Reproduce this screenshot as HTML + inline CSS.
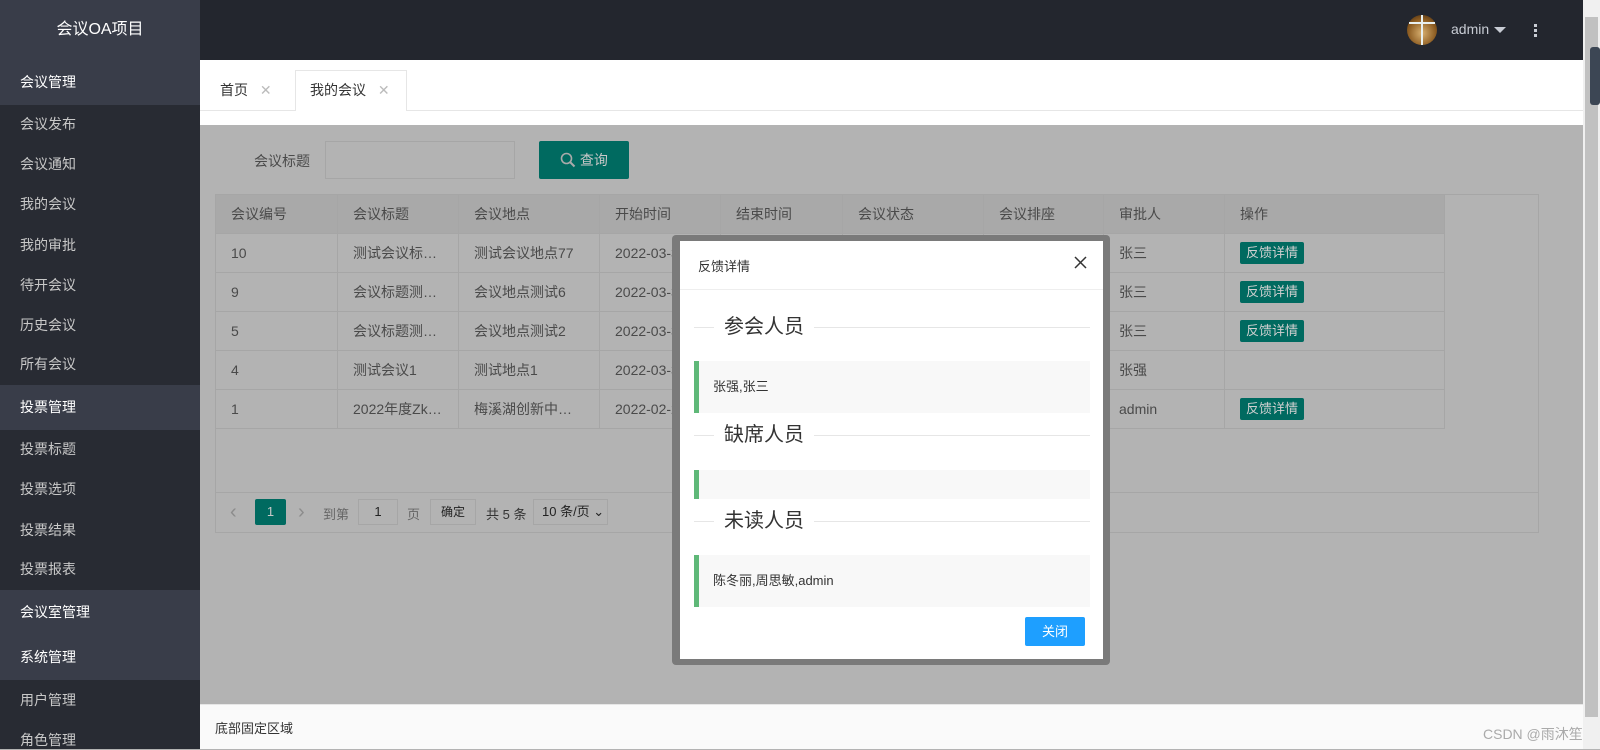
<!DOCTYPE html>
<html><head><meta charset="utf-8"><style>
*{margin:0;padding:0;box-sizing:border-box}
body{width:1600px;height:749px;overflow:hidden;position:relative;font-family:"Liberation Sans","Noto Sans CJK SC",sans-serif;font-size:14px;background:#b3b3b3}
.a{position:absolute}
#side{left:0;top:0;width:200px;height:749px;background:#282b33;color:#c8c8c8}
#side .g{position:absolute;left:0;width:200px;height:45px;background:#393d49;color:#fff;line-height:45px;padding-left:20px}
#side .i{position:absolute;left:20px;line-height:20px}
#top{left:200px;top:0;width:1383px;height:60px;background:#23262e}
#tabs{left:200px;top:60px;width:1383px;height:65px;background:#fff}
td,th{border:1px solid #a6a6a6;height:39px;padding-left:15px;text-align:left;font-weight:normal;color:#4a4a4a;white-space:nowrap;overflow:hidden}
table{border-collapse:collapse;table-layout:fixed}
.btn{display:inline-block;background:#006a60;color:#d0d0d0;font-size:13px;padding:0 6px;height:22px;line-height:22px;border-radius:2px}
.sec{position:absolute;left:694px;width:396px;height:1px;background:#e6e6e6}
.sec span{position:absolute;left:20px;top:-14px;background:#fff;padding:0 10px;font-size:20px;color:#333;line-height:28px}
.box{position:absolute;left:694px;width:396px;background:#f8f8f8;border-left:5px solid #5fb878;padding-left:14px;color:#333}
</style></head><body>
<div id="side" class="a">
<div class="g" style="top:0;height:60px;line-height:60px;padding:0;text-align:center;font-size:16px">会议OA项目</div>
<div class="g" style="top:60px">会议管理</div>
<div class="i" style="top:114px">会议发布</div>
<div class="i" style="top:154px">会议通知</div>
<div class="i" style="top:194px">我的会议</div>
<div class="i" style="top:235px">我的审批</div>
<div class="i" style="top:275px">待开会议</div>
<div class="i" style="top:315px">历史会议</div>
<div class="i" style="top:354px">所有会议</div>
<div class="g" style="top:385px">投票管理</div>
<div class="i" style="top:439px">投票标题</div>
<div class="i" style="top:479px">投票选项</div>
<div class="i" style="top:520px">投票结果</div>
<div class="i" style="top:559px">投票报表</div>
<div class="g" style="top:590px">会议室管理</div>
<div class="g" style="top:635px">系统管理</div>
<div class="i" style="top:690px">用户管理</div>
<div class="i" style="top:730px">角色管理</div>
</div>
<div id="top" class="a">
<div class="a" style="left:1207px;top:15px;width:30px;height:30px;border-radius:50%;background:radial-gradient(circle at 50% 60%,#d8b070,#8a5a20 60%,#3a2410)"></div>
<div class="a" style="left:1221px;top:15px;width:2px;height:30px;background:#e8f0f0"></div>
<div class="a" style="left:1209px;top:22px;width:26px;height:2px;background:#e8f0f0"></div>
<div class="a" style="left:1251px;top:21px;color:#c8ccd4;font-size:14px">admin</div>
<div class="a" style="left:1294px;top:27px;border:6px solid transparent;border-top:6px solid #c8ccd4"></div>
<div class="a" style="left:1334px;top:24px;width:3px;height:3px;background:#c8ccd4;box-shadow:0 5px #c8ccd4,0 10px #c8ccd4"></div>
</div>
<div class="a" style="left:1583px;top:0;width:17px;height:749px;background:#f0f0f0"></div>
<div class="a" style="left:1585px;top:17px;width:13px;height:700px;background:#c1c1c1"></div>
<div class="a" style="left:1590px;top:47px;width:10px;height:58px;background:#3c4654;border-radius:3px"></div>
<div id="tabs" class="a">
<div class="a" style="left:0;top:50px;width:1383px;height:1px;background:#e6e6e6"></div>
<div class="a" style="left:20px;top:20px;color:#333">首页 <span style="color:#bbb;margin-left:8px">✕</span></div>
<div class="a" style="left:95px;top:10px;width:112px;height:41px;background:#fff;border:1px solid #e6e6e6;border-bottom:none"></div>
<div class="a" style="left:110px;top:20px;color:#333">我的会议 <span style="color:#bbb;margin-left:8px">✕</span></div>
</div>
<div class="a" style="left:254px;top:151px;color:#4a4a4a">会议标题</div>
<div class="a" style="left:325px;top:141px;width:190px;height:38px;border:1px solid #a6a6a6"></div>
<div class="a" style="left:539px;top:141px;width:90px;height:38px;background:#006a60;border-radius:2px;color:#c8c8c8;line-height:38px;padding-left:21px">
<svg width="16" height="16" viewBox="0 0 16 16" style="vertical-align:-3px"><circle cx="6.5" cy="6.5" r="5" fill="none" stroke="#aaa" stroke-width="1.6"/><path d="M10 10l4.5 4.5" stroke="#aaa" stroke-width="2"/></svg> 查询</div>
<div class="a" style="left:215px;top:194px;width:1324px;height:339px;border:1px solid #a6a6a6"></div>
<table class="a" style="left:215px;top:194px;width:1229px">
<colgroup><col style="width:122px"><col style="width:121px"><col style="width:141px"><col style="width:121px"><col style="width:122px"><col style="width:141px"><col style="width:120px"><col style="width:121px"><col style="width:220px"></colgroup>
<tr style="background:#a9a9a9"><th>会议编号</th><th>会议标题</th><th>会议地点</th><th>开始时间</th><th>结束时间</th><th>会议状态</th><th>会议排座</th><th>审批人</th><th>操作</th></tr>
<tr><td>10</td><td>测试会议标…</td><td>测试会议地点77</td><td>2022-03-3</td><td></td><td></td><td></td><td>张三</td><td><span class="btn">反馈详情</span></td></tr>
<tr><td>9</td><td>会议标题测…</td><td>会议地点测试6</td><td>2022-03-3</td><td></td><td></td><td></td><td>张三</td><td><span class="btn">反馈详情</span></td></tr>
<tr><td>5</td><td>会议标题测…</td><td>会议地点测试2</td><td>2022-03-3</td><td></td><td></td><td></td><td>张三</td><td><span class="btn">反馈详情</span></td></tr>
<tr><td>4</td><td>测试会议1</td><td>测试地点1</td><td>2022-03-3</td><td></td><td></td><td></td><td>张强</td><td></td></tr>
<tr><td>1</td><td>2022年度Zk…</td><td>梅溪湖创新中…</td><td>2022-02-2</td><td></td><td></td><td></td><td>admin</td><td><span class="btn">反馈详情</span></td></tr>
</table>
<div class="a" style="left:215px;top:492px;width:1324px;height:1px;background:#a6a6a6"></div>
<div class="a" style="left:230px;top:500px;color:#8c8c8c;font-size:20px;line-height:24px">‹</div>
<div class="a" style="left:255px;top:499px;width:31px;height:26px;background:#006a60;color:#c8c8c8;text-align:center;line-height:26px;font-size:13px;border-radius:2px">1</div>
<div class="a" style="left:298px;top:500px;color:#8c8c8c;font-size:20px;line-height:24px">›</div>
<div class="a" style="left:323px;top:504px;color:#666;font-size:13px">到第</div>
<div class="a" style="left:358px;top:499px;width:40px;height:26px;border:1px solid #a6a6a6;text-align:center;line-height:24px;font-size:13px;color:#222">1</div>
<div class="a" style="left:407px;top:504px;color:#666;font-size:13px">页</div>
<div class="a" style="left:430px;top:499px;width:46px;height:26px;border:1px solid #a6a6a6;text-align:center;line-height:24px;font-size:12px;color:#222">确定</div>
<div class="a" style="left:486px;top:504px;color:#333;font-size:13px">共 5 条</div>
<div class="a" style="left:533px;top:499px;width:75px;height:26px;border:1px solid #a6a6a6;line-height:24px;font-size:13px;color:#222;padding-left:8px">10 条/页 ⌄</div>
<div class="a" style="left:200px;top:704px;width:1383px;height:45px;background:#fafafa;border-top:1px solid #e6e6e6"></div>
<div class="a" style="left:215px;top:718px;color:#333;font-size:13px">底部固定区域</div>
<div class="a" style="left:1483px;top:724px;color:#aaa;font-size:14px">CSDN @雨沐笙</div>
<div class="a" style="left:672px;top:235px;width:438px;height:430px;background:#7a7a7a;border-radius:4px"></div>
<div class="a" style="left:680px;top:241px;width:423px;height:418px;background:#fff"></div>
<div class="a" style="left:698px;top:256px;color:#333;font-size:13px">反馈详情</div>
<svg class="a" style="left:1074px;top:256px" width="13" height="13" viewBox="0 0 13 13"><path d="M1 1L12 12M12 1L1 12" stroke="#333" stroke-width="1.5"/></svg>
<div class="a" style="left:680px;top:289px;width:423px;height:1px;background:#eee"></div>
<div class="sec" style="top:327px"><span>参会人员</span></div>
<div class="box" style="top:361px;height:52px;line-height:52px;font-size:13px">张强,张三</div>
<div class="sec" style="top:435px"><span>缺席人员</span></div>
<div class="box" style="top:470px;height:29px"></div>
<div class="sec" style="top:521px"><span>未读人员</span></div>
<div class="box" style="top:555px;height:52px;line-height:52px;font-size:13px">陈冬丽,周思敏,admin</div>
<div class="a" style="left:1025px;top:617px;width:60px;height:29px;background:#1e9fff;color:#fff;text-align:center;line-height:29px;font-size:13px;border-radius:2px">关闭</div>
</body></html>
